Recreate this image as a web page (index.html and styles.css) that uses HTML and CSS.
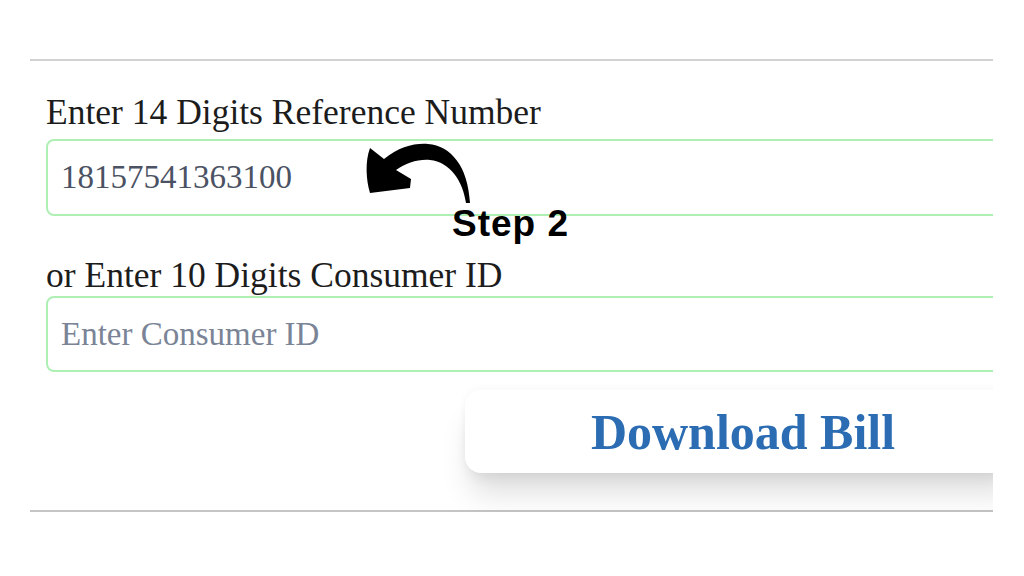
FILE: index.html
```html
<!DOCTYPE html>
<html lang="en">
<head>
    <meta charset="UTF-8">
    <meta name="viewport" content="width=device-width, initial-scale=1.0">
    <title>Download Bill</title>
    <link rel="stylesheet" href="styles.css">
</head>
<body>
    <div class="panel">
        <form class="billForm">
            <label class="fieldLabel" for="refNo">Enter 14 Digits Reference Number</label>
            <input type="text" class="field" id="refNo" name="REFNO" value="18157541363100">

            <label class="fieldLabel second" for="consumerId">or Enter 10 Digits Consumer ID</label>
            <input type="text" class="field" id="consumerId" name="CONSUMERID" placeholder="Enter Consumer ID">

            <div class="actions">
                <button type="button" class="downloadBtn">Download Bill</button>
            </div>
        </form>

        <!-- annotation drawn over the form -->
        <svg class="stepArrow" viewBox="360 140 115 66" width="115" height="66">
            <path d="M370 148 L384 159 C399 147 414 143 428 144 C451 146 468 166 470 203 L466 203 C463 181 450 162 430 160 C418 159 406 163 396 170 L411 179 L410 188 L370 193 C366 180 365 161 370 148 Z" fill="#000"/>
        </svg>
        <div class="stepLabel">Step 2</div>
    </div>
</body>
</html>
```

FILE: styles.css
```css
body{
    margin: 0;
    background: #fff;
}
.panel{
    position: relative;
    margin: 59px 0 0 30px;
    width: 963px;
    border-top: 2px solid #d2d2d2;
    border-bottom: 2px solid #c4c4c4;
    overflow-x: clip;
    overflow-y: visible;
}
.billForm{
    padding: 0 0 37px 16px;
    box-sizing: border-box;
    width: 991px;
}
.fieldLabel{
    display: block;
    font-family: "Liberation Serif", serif;
    font-size: 35.5px;
    line-height: 40px;
    color: #1c1c1c;
    margin: 31px 0 7px;
}
.fieldLabel.second{
    margin: 39px 0 1px;
}
.field{
    display: block;
    width: 100%;
    height: 77px;
    box-sizing: border-box;
    border: 2px solid #aef0b4;
    border-radius: 8px;
    padding: 0 13px;
    font-family: "Liberation Serif", serif;
    font-size: 33px;
    color: #4b5263;
    outline: none;
    background: #fff;
}
.field::placeholder{
    color: #7a8496;
}
#consumerId{
    height: 76px;
}
.actions{
    display: flex;
    justify-content: flex-end;
    margin-top: 18px;
}
.downloadBtn{
    width: 556px;
    height: 83px;
    border: none;
    border-radius: 16px;
    background: #fff;
    font-family: "Liberation Serif", serif;
    font-weight: bold;
    font-size: 50px;
    line-height: 85px;
    padding: 0;
    color: #2b6cb3;
    box-shadow: 0 26px 30px -6px rgba(0,0,0,0.13), 0 8px 14px -4px rgba(0,0,0,0.07), 0 -2px 10px rgba(0,0,0,0.03);
}
.stepArrow{
    position: absolute;
    left: 330px;
    top: 79px;
}
.stepLabel{
    position: absolute;
    left: 422px;
    top: 145px;
    font-family: "Liberation Sans", Arial, sans-serif;
    font-weight: bold;
    font-size: 37px;
    line-height: 36px;
    letter-spacing: 1px;
    color: #000;
}
```
